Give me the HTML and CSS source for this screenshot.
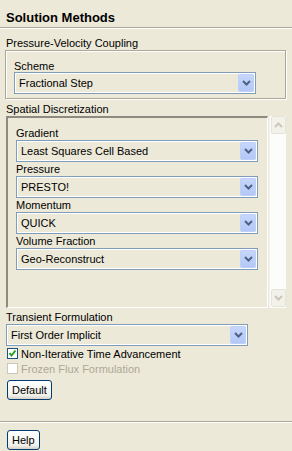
FILE: index.html
```html
<!DOCTYPE html>
<html lang="en">
<head>
    <meta charset="UTF-8">
    <meta name="viewport" content="width=device-width, initial-scale=1.0">
    <title>Solution Methods</title>
    <link rel="stylesheet" href="styles.css">
</head>
<body>
    <div class="title">Solution Methods</div>
    <div class="body">
        <div class="section-label">Pressure-Velocity Coupling</div>
        <div class="group">
            <div class="field-label">Scheme</div>
            <div class="combo">
                <span class="combo-text">Fractional Step</span>
                <span class="combo-btn"><svg width="9" height="6" viewBox="0 0 9 6"><path d="M1 1 L4.5 4.5 L8 1" fill="none" stroke="#4d6185" stroke-width="2"/></svg></span>
            </div>
        </div>

        <div class="section-label spatial">Spatial Discretization</div>
        <div class="scroll">
            <div class="scroll-content">
                <div class="row-label">Gradient</div>
                <div class="combo">
                    <span class="combo-text">Least Squares Cell Based</span>
                    <span class="combo-btn"><svg width="9" height="6" viewBox="0 0 9 6"><path d="M1 1 L4.5 4.5 L8 1" fill="none" stroke="#4d6185" stroke-width="2"/></svg></span>
                </div>
                <div class="row-label">Pressure</div>
                <div class="combo">
                    <span class="combo-text">PRESTO!</span>
                    <span class="combo-btn"><svg width="9" height="6" viewBox="0 0 9 6"><path d="M1 1 L4.5 4.5 L8 1" fill="none" stroke="#4d6185" stroke-width="2"/></svg></span>
                </div>
                <div class="row-label">Momentum</div>
                <div class="combo">
                    <span class="combo-text">QUICK</span>
                    <span class="combo-btn"><svg width="9" height="6" viewBox="0 0 9 6"><path d="M1 1 L4.5 4.5 L8 1" fill="none" stroke="#4d6185" stroke-width="2"/></svg></span>
                </div>
                <div class="row-label">Volume Fraction</div>
                <div class="combo">
                    <span class="combo-text">Geo-Reconstruct</span>
                    <span class="combo-btn"><svg width="9" height="6" viewBox="0 0 9 6"><path d="M1 1 L4.5 4.5 L8 1" fill="none" stroke="#4d6185" stroke-width="2"/></svg></span>
                </div>
            </div>
            <div class="scrollbar">
                <span class="sb-btn"><svg width="9" height="6" viewBox="0 0 9 6"><path d="M1 5 L4.5 1.5 L8 5" fill="none" stroke="#c9c7ba" stroke-width="2"/></svg></span>
                <span class="sb-btn"><svg width="9" height="6" viewBox="0 0 9 6"><path d="M1 1 L4.5 4.5 L8 1" fill="none" stroke="#c9c7ba" stroke-width="2"/></svg></span>
            </div>
        </div>

        <div class="section-label transient">Transient Formulation</div>
        <div class="combo">
            <span class="combo-text">First Order Implicit</span>
            <span class="combo-btn"><svg width="9" height="6" viewBox="0 0 9 6"><path d="M1 1 L4.5 4.5 L8 1" fill="none" stroke="#4d6185" stroke-width="2"/></svg></span>
        </div>
        <div class="check">
            <span class="box"><svg width="9" height="9" viewBox="0 0 9 9"><path d="M1.5 4 L3.5 6.5 L7.5 1.5" fill="none" stroke="#21a121" stroke-width="2"/></svg></span>
            <span>Non-Iterative Time Advancement</span>
        </div>
        <div class="check disabled">
            <span class="box"></span>
            <span>Frozen Flux Formulation</span>
        </div>
        <button class="btn default">Default</button>
    </div>
    <div class="footer">
        <button class="btn">Help</button>
    </div>
</body>
</html>
```

FILE: styles.css
```css
body { margin: 0; background: #ece9d8; color: #000; font-family: "Liberation Sans", Arial, sans-serif; font-size: 11px; width: 292px; height: 451px; overflow: hidden; }
.title { font-size: 13px; font-weight: bold; line-height: 16px; padding: 10px 6px 1px; border-bottom: 1px solid #aca899; box-shadow: 0 1px 0 #fff; }
.body { padding: 8px 6px 0; }
.section-label { line-height: 14px; }
.section-label.spatial { margin-top: 3px; }
.section-label.transient { margin-top: 3px; line-height: 13px; }
.group { margin-left: -1px; border: 1px solid #aca899; box-shadow: inset 1px 1px 0 #fff, 1px 1px 0 #fff; padding: 9px 28px 4px 8px; }
.field-label { line-height: 12px; }
.combo { display: flex; align-items: stretch; width: 242px; height: 22px; box-sizing: border-box; border: 1px solid #7f9db9; box-shadow: inset 0 0 0 1px #fff; padding: 1px; }
.combo-text { flex: 1; padding-left: 3px; line-height: 18px; white-space: nowrap; overflow: hidden; }
.combo-btn { width: 16px; display: flex; align-items: center; justify-content: center; background: linear-gradient(#c6d6fc, #b3c8f5); border: 1px solid #bdd0fb; border-radius: 2px; box-sizing: border-box; }
.scroll { display: flex; height: 192px; }
.scroll-content { flex: 1; border-top: 2px solid #8d8b80; border-left: 2px solid #8d8b80; border-right: 1px solid #fff; border-bottom: 1px solid #fff; padding: 8px 8px 0; }
.row-label { line-height: 14px; }
.scrollbar { width: 17px; margin-left: 1px; background: #fcfcfa; border-left: 1px solid #f4f3ee; display: flex; flex-direction: column; justify-content: space-between; padding: 0 0 1px 1px; box-sizing: border-box; }
.sb-btn { height: 16px; display: flex; align-items: center; justify-content: center; background: #f2f1ea; border: 1px solid #e6e4da; border-radius: 2px; }
.check { display: flex; align-items: center; height: 15px; gap: 3px; padding-left: 1px; }
.check .box { width: 11px; height: 11px; box-sizing: border-box; border: 1px solid #1c5180; background: #fff; display: flex; align-items: center; justify-content: center; }
.check.disabled { color: #aca899; }
.check.disabled .box { border-color: #cac8bb; }
.btn { font-family: "Liberation Sans", Arial, sans-serif; font-size: 11px; color: #000; height: 20px; padding: 0 4px; border: 1px solid #003c74; border-radius: 3px; background: linear-gradient(#fff, #f0f0ea 80%, #d6d0c5); margin-left: 1px; }
.btn.default { margin-top: 4px; }
.footer { margin-top: 21px; border-top: 1px solid #aca899; box-shadow: inset 0 1px 0 #fff; padding: 8px 6px 0; }
```
